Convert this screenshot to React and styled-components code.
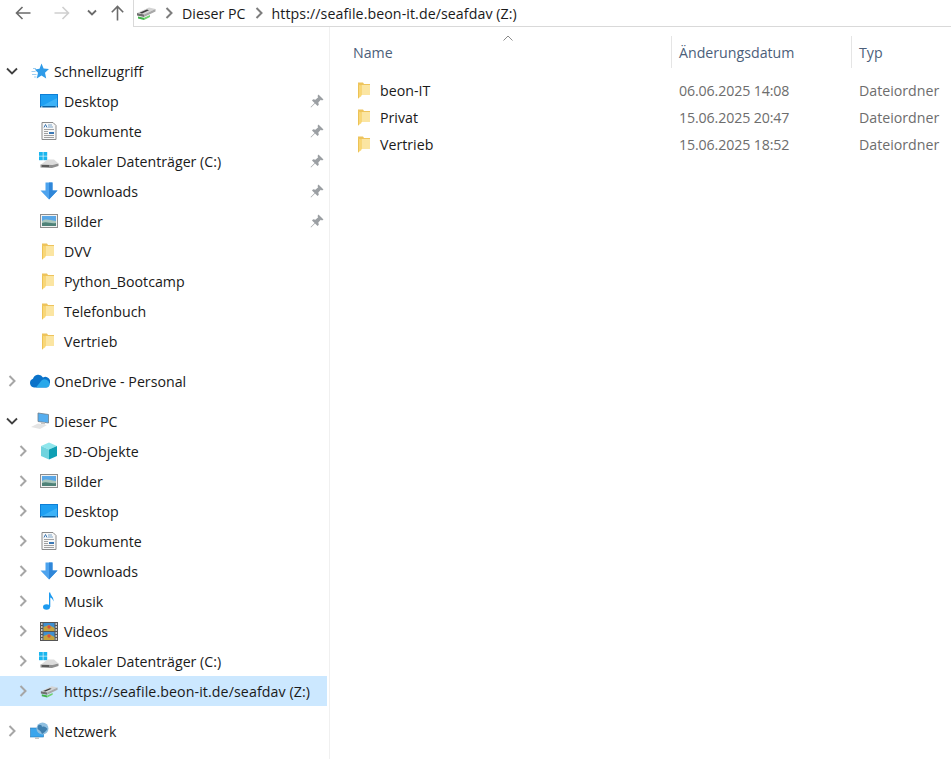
import React from "react";
import styled, { createGlobalStyle } from "styled-components";

const GlobalStyle = createGlobalStyle`
  html, body {
    margin: 0;
    padding: 0;
    height: 100%;
    background: #fff;
    overflow: hidden;
  }
  body {
    font-family: "Open Sans", "Noto Sans", "Liberation Sans", sans-serif;
    font-size: 14.2px;
    color: #1a1a1a;
  }
`;

const Window = styled.div`
  width: 951px;
  height: 759px;
  display: flex;
  flex-direction: column;
  overflow: hidden;
`;

const Toolbar = styled.div`
  height: 27px;
  flex: none;
  display: flex;
`;

const NavButtons = styled.div`
  width: 133px;
  flex: none;
  display: flex;
  align-items: center;
  padding-left: 15px;
  padding-bottom: 1px;
  box-sizing: border-box;
`;

const NavButton = styled.span`
  display: flex;
  width: ${(p) => p.$w}px;
  flex: none;
  color: ${(p) => (p.$off ? "#cfcfcf" : "#6b6b6b")};
`;

const AddressBar = styled.div`
  flex: 1;
  display: flex;
  align-items: center;
  border-left: 1px solid #d9d9d9;
  border-bottom: 1px solid #d9d9d9;
  padding-left: 2px;
  gap: 7px;
`;

const Crumb = styled.span`
  white-space: nowrap;
  letter-spacing: ${(p) => (p.$url ? "0.08px" : "0")};
`;

const Sep = styled.span`
  display: flex;
  color: #7d7d7d;
`;

const Body = styled.div`
  flex: 1;
  display: flex;
  min-height: 0;
`;

const Sidebar = styled.nav`
  width: 330px;
  flex: none;
  box-sizing: border-box;
  border-right: 1px solid #f0f0f0;
  padding-top: 29px;
`;

const Group = styled.div`
  margin-bottom: 10px;
`;

const Row = styled.div`
  height: 30px;
  width: 327px;
  display: flex;
  align-items: center;
  box-sizing: border-box;
  padding-left: ${(p) => (p.$depth ? 17 : 6)}px;
  background: ${(p) => (p.$active ? "#cce8ff" : "transparent")};
  white-space: nowrap;
`;

const Chevron = styled.span`
  width: ${(p) => (p.$depth ? 23 : 24)}px;
  height: 12px;
  flex: none;
  display: flex;
  color: ${(p) => (p.$open ? "#404040" : "#a6a6a6")};
`;

const IconSlot = styled.span`
  width: 24px;
  height: 20px;
  flex: none;
  display: flex;
  align-items: center;
`;

const Label = styled.span`
  flex: 1;
  min-width: 0;
  letter-spacing: ${(p) => (p.$wide ? "0.1px" : "0")};
`;

const Pin = styled.span`
  width: 14px;
  height: 14px;
  flex: none;
  margin-right: 3px;
  display: flex;
  color: #9b9fa3;
`;

const Main = styled.main`
  flex: 1;
  min-width: 0;
  position: relative;
`;

const SortMark = styled.span`
  position: absolute;
  left: 173px;
  top: 8px;
  display: flex;
  color: #8a8a8a;
`;

const Columns = styled.div`
  display: grid;
  grid-template-columns: 341px 180px 1fr;
`;

const HeadRow = styled(Columns)`
  height: 32px;
  margin-top: 9px;
  margin-bottom: 9px;
  align-items: stretch;
`;

const HeadCell = styled.div`
  display: flex;
  align-items: center;
  color: #4c607a;
  padding-left: ${(p) => (p.$first ? 23 : 7)}px;
  border-left: ${(p) => (p.$first ? "none" : "1px solid #e5e5e5")};
  white-space: nowrap;
`;

const FileRow = styled(Columns)`
  height: 27px;
  align-items: center;
  white-space: nowrap;
`;

const NameCell = styled.div`
  display: flex;
  align-items: center;
  padding-left: 26px;
  gap: 10px;
`;

const MetaCell = styled.div`
  color: #6d6d6d;
  padding-left: 8px;
  letter-spacing: ${(p) => (p.$tight ? "-0.12px" : "0")};
`;

const Folder = () => (
  <svg width="12" height="17" viewBox="0 0 12 17" style={{ marginLeft: 2 }}>
    <path d="M0 0.5h5l1 1.5h6v11H0z" fill="#eec45c" />
    <path d="M3.5 3H12v10H3.5z" fill="#fbe5a2" />
    <path d="M0 2.5 L3.5 3.5 V14 L0 16.5z" fill="#f9d776" />
    <path d="M0 2.5 L0.8 2.7 V16 L0 16.5z" fill="#e9bd4f" />
  </svg>
);

const Desktop = () => (
  <svg width="18" height="14" viewBox="0 0 18 14">
    <rect x="0" y="0" width="18" height="13" fill="#0f7fd6" />
    <rect x="1" y="1" width="16" height="11" fill="#1fa0f2" />
    <path d="M2 12 L17 4 V12z" fill="#3db2f7" />
    <rect x="0" y="12" width="18" height="1.5" fill="#0a5f9f" />
    <rect x="1" y="12.5" width="1.4" height="1" fill="#fff" />
    <rect x="15.6" y="12.5" width="1.4" height="1" fill="#fff" />
  </svg>
);

const Docs = () => (
  <svg width="18" height="18" viewBox="0 0 18 18">
    <path d="M2 0.5H13L16 3.5V17.5H2z" fill="#f7f7f7" stroke="#8b8b8b" />
    <path d="M4 5.5L5.5 2.5L7 5.5" stroke="#3b78b5" fill="none" />
    <path d="M8 3h4M8 5h5" stroke="#7ea6c9" />
    <path d="M4 7.5h10M4 9.5h4M4 13.5h10M4 15.5h10" stroke="#a0a0a0" />
    <path d="M9 10h5v2H9z" fill="#3b78b5" />
    <path d="M4 11.5h4" stroke="#a0a0a0" />
  </svg>
);

const LocalDisk = () => (
  <svg width="20" height="18" viewBox="0 0 20 18" style={{ marginLeft: -1 }}>
    <rect x="0" y="0" width="3.8" height="3.8" fill="#19b5ee" />
    <rect x="4.4" y="0" width="3.8" height="3.8" fill="#19b5ee" />
    <rect x="0" y="4.4" width="3.8" height="3.8" fill="#19b5ee" />
    <rect x="4.4" y="4.4" width="3.8" height="3.8" fill="#19b5ee" />
    <path d="M2 12.5 L8.5 7.5 H15 L19.5 11.5 L10 13.5z" fill="#dcdcdc" />
    <path d="M1.5 12.5 L13 13 L19.5 11.5 V14 L13 16 L1.5 15.5z" fill="#8f8f8f" />
    <path d="M3 14h7" stroke="#3a3a3a" strokeWidth="1.2" />
  </svg>
);

const NetDrive = ({ w = 18 }) => (
  <svg width={w} height={w * 0.78} viewBox="0 0 20 15.6">
    <path d="M1 8 L13 2.5 L19.5 4 L8 9.5z" fill="#d4d4d4" />
    <path d="M1 8 L8 9.5 V12 L1 10.5z" fill="#707070" />
    <path d="M8 9.5 L19.5 4 V6.5 L8 12z" fill="#a8a8a8" />
    <path d="M3.5 7.7 L11 4.6 L13 5.2 L6 8.4z" fill="#3f3f3f" />
    <path d="M2 11.5 L8 12.8 V15 L2 13.6z" fill="#41b24a" />
    <path d="M8 12.8 L14 10 V12 L8 15z" fill="#6fd16f" />
  </svg>
);

const DownArrow = () => (
  <svg width="18" height="18" viewBox="0 0 18 18">
    <path d="M5.5 0.5h7v8h5L9 17.5 0.5 8.5h5z" fill="#4da3ee" />
    <path d="M9 0.5h3.5v8h5L9 17.5z" fill="#2f86d8" />
  </svg>
);

const Pictures = () => (
  <svg width="18" height="14" viewBox="0 0 18 14">
    <rect x="0.5" y="0.5" width="17" height="13" fill="#f2f2f2" stroke="#8d8d8d" />
    <rect x="2" y="2" width="14" height="5" fill="#5aa7e6" />
    <path d="M2 7 C6 4 9 6 16 7 V12 H2z" fill="#a9c6bd" />
    <path d="M2 9 C7 7 10 10 16 9 V12 H2z" fill="#4f8278" />
  </svg>
);

const Star = () => (
  <svg width="18" height="17" viewBox="0 0 18 17" style={{ marginLeft: 1 }}>
    <path d="M10.5 0.5 L12.6 5.5 L18 6 L14 9.8 L15.2 15.5 L10.5 12.6 L5.8 15.5 L7 9.8 L3.8 6.6 L8.5 5.8z" fill="#2f9be8" />
    <path d="M2 5.5h3M0.5 8.5h4M1 11.5h4.5M3 14h2.5" stroke="#9dcdf0" strokeWidth="1" />
  </svg>
);

const Cloud = () => (
  <svg width="21" height="14" viewBox="0 0 21 14" style={{ marginLeft: -1 }}>
    <path d="M5 13.5 A4.5 4.5 0 0 1 4 4.8 A5.5 5.5 0 0 1 14 3.5 A4.8 4.8 0 0 1 20.5 10 A3.6 3.6 0 0 1 17 13.5z" fill="#0a72c9" />
    <path d="M7 13.5 L12.5 6.5 A4.8 4.8 0 0 1 20.5 10 A3.6 3.6 0 0 1 17 13.5z" fill="#28a8ea" />
  </svg>
);

const Computer = () => (
  <svg width="20" height="18" viewBox="0 0 20 18">
    <path d="M8 1 L18.5 2.5 V11 L8 9.5z" fill="#55aef0" stroke="#6f7f8c" strokeWidth="0.8" />
    <path d="M11 10 L15 10.6 L15 12.5 L11 12z" fill="#c5c5c5" />
    <path d="M1 15 L8 11.5 L17 13 L10 17z" fill="#e4e4e4" />
  </svg>
);

const Cube = () => (
  <svg width="18" height="18" viewBox="0 0 18 18">
    <path d="M9 0.5 L17 4 L9 7.5 L1 4z" fill="#8fe6ec" />
    <path d="M1 4 L9 7.5 V17.5 L1 14z" fill="#6fd3de" />
    <path d="M9 7.5 L17 4 V14 L9 17.5z" fill="#0f9fb3" />
  </svg>
);

const Note = () => (
  <svg width="18" height="18" viewBox="0 0 18 18">
    <ellipse cx="6.5" cy="15" rx="3.5" ry="2.8" fill="#1e9bf0" />
    <path d="M9 15 V0.5 H10.2 C10.8 4 14 5 13.5 9.5 C12.8 7 11.5 6 10.3 5.5 V15z" fill="#1e9bf0" />
  </svg>
);

const Film = () => (
  <svg width="18" height="19" viewBox="0 0 18 19">
    <rect x="0" y="0" width="18" height="19" fill="#555" />
    <rect x="3.5" y="1" width="11" height="8" fill="#3f8fd0" />
    <rect x="3.5" y="10" width="11" height="8" fill="#3f8fd0" />
    <path d="M3.5 5 L9 3 L14.5 6 V9 H3.5z" fill="#c7a33b" />
    <path d="M3.5 14 L9 12 L14.5 15 V18 H3.5z" fill="#c7a33b" />
    <circle cx="9" cy="5" r="1.7" fill="#d9503f" />
    <circle cx="9" cy="14" r="1.7" fill="#d9503f" />
    <path d="M1 2h1.5M1 5h1.5M1 8h1.5M1 11h1.5M1 14h1.5M1 17h1.5M15.5 2H17M15.5 5H17M15.5 8H17M15.5 11H17M15.5 14H17M15.5 17H17" stroke="#eee" strokeWidth="1.3" />
  </svg>
);

const Globe = () => (
  <svg width="20" height="18" viewBox="0 0 20 18">
    <rect x="0.5" y="6" width="13" height="9" fill="#3ba5ec" stroke="#2679b8" strokeWidth="0.6" />
    <path d="M5 15.5h4v1.4H5z" fill="#bdbdbd" />
    <circle cx="12.5" cy="6.5" r="6" fill="#8fbfe0" />
    <path d="M8 3.5 C10 2 12 3 12 5 C14 4 16 5 17.5 7 C16 9 14 11 12 12 C11 9 9 8 7.5 7z" fill="#3f7fae" />
  </svg>
);

const ChevronRight = () => (
  <svg width="12" height="12" viewBox="0 0 12 12" fill="none" stroke="currentColor" strokeWidth="2">
    <path d="M3.5 1 L8.5 6 L3.5 11" />
  </svg>
);

const ChevronDown = () => (
  <svg width="12" height="12" viewBox="0 0 12 12" fill="none" stroke="currentColor" strokeWidth="1.8">
    <path d="M1 3.5 L6 8.5 L11 3.5" />
  </svg>
);

const PinIcon = () => (
  <svg width="14" height="14" viewBox="0 0 14 14" fill="currentColor">
    <path d="M8.5 0.5 L13.5 5.5 L12 6.5 L10.8 5.8 L8.3 8.6 L8.8 10.8 L7.6 12 L5 9.4 L1 13.4 L0.6 13 L4.6 9 L2 6.4 L3.2 5.2 L5.4 5.7 L8.2 3.2 L7.5 2z" />
  </svg>
);

const ArrowLeft = () => (
  <svg width="16" height="14" viewBox="0 0 16 14" fill="none" stroke="currentColor" strokeWidth="1.6">
    <path d="M15.5 7 H1.5 M7.5 1 L1.5 7 L7.5 13" />
  </svg>
);

const ArrowRight = () => (
  <svg width="16" height="14" viewBox="0 0 16 14" fill="none" stroke="currentColor" strokeWidth="1.6">
    <path d="M0.5 7 H14.5 M8.5 1 L14.5 7 L8.5 13" />
  </svg>
);

const ArrowUp = () => (
  <svg width="13" height="16" viewBox="0 0 13 16" fill="none" stroke="currentColor" strokeWidth="1.6">
    <path d="M6.5 15.5 V1.5 M0.8 7.2 L6.5 1.5 L12.2 7.2" />
  </svg>
);

const SmallDown = () => (
  <svg width="10" height="8" viewBox="0 0 10 8" fill="none" stroke="currentColor" strokeWidth="1.8">
    <path d="M1 1.5 L5 5.5 L9 1.5" />
  </svg>
);

const SortUp = () => (
  <svg width="10" height="6" viewBox="0 0 10 6" fill="none" stroke="currentColor" strokeWidth="1">
    <path d="M0.5 5.5 L5 1 L9.5 5.5" />
  </svg>
);

const quickAccess = [
  { icon: <Desktop />, label: "Desktop", pinned: true },
  { icon: <Docs />, label: "Dokumente", pinned: true },
  { icon: <LocalDisk />, label: "Lokaler Datenträger (C:)", pinned: true },
  { icon: <DownArrow />, label: "Downloads", pinned: true },
  { icon: <Pictures />, label: "Bilder", pinned: true },
  { icon: <Folder />, label: "DVV" },
  { icon: <Folder />, label: "Python_Bootcamp" },
  { icon: <Folder />, label: "Telefonbuch" },
  { icon: <Folder />, label: "Vertrieb" },
];

const thisPc = [
  { icon: <Cube />, label: "3D-Objekte" },
  { icon: <Pictures />, label: "Bilder" },
  { icon: <Desktop />, label: "Desktop" },
  { icon: <Docs />, label: "Dokumente" },
  { icon: <DownArrow />, label: "Downloads" },
  { icon: <Note />, label: "Musik" },
  { icon: <Film />, label: "Videos" },
  { icon: <LocalDisk />, label: "Lokaler Datenträger (C:)" },
  { icon: <NetDrive />, label: "https://seafile.beon-it.de/seafdav (Z:)", active: true },
];

const files = [
  { name: "beon-IT", date: "06.06.2025 14:08", type: "Dateiordner" },
  { name: "Privat", date: "15.06.2025 20:47", type: "Dateiordner" },
  { name: "Vertrieb", date: "15.06.2025 18:52", type: "Dateiordner" },
];

const TreeRow = ({ depth, arrow, icon, label, pinned, active }) => (
  <Row $depth={depth} $active={active}>
    <Chevron $depth={depth} $open={arrow === "open"}>
      {arrow === "open" && <ChevronDown />}
      {arrow === "closed" && <ChevronRight />}
    </Chevron>
    <IconSlot>{icon}</IconSlot>
    <Label $wide={active}>{label}</Label>
    {pinned && (
      <Pin>
        <PinIcon />
      </Pin>
    )}
  </Row>
);

export default function App() {
  return (
    <Window>
      <GlobalStyle />
      <Toolbar>
        <NavButtons>
          <NavButton $w={39}>
            <ArrowLeft />
          </NavButton>
          <NavButton $w={33} $off>
            <ArrowRight />
          </NavButton>
          <NavButton $w={24}>
            <SmallDown />
          </NavButton>
          <NavButton $w={14}>
            <ArrowUp />
          </NavButton>
        </NavButtons>
        <AddressBar>
          <NetDrive w={20} />
          <Sep>
            <ChevronRight />
          </Sep>
          <Crumb>Dieser PC</Crumb>
          <Sep>
            <ChevronRight />
          </Sep>
          <Crumb $url>https://seafile.beon-it.de/seafdav (Z:)</Crumb>
        </AddressBar>
      </Toolbar>
      <Body>
        <Sidebar>
          <Group>
            <TreeRow arrow="open" icon={<Star />} label="Schnellzugriff" />
            {quickAccess.map((item) => (
              <TreeRow key={item.label} depth={1} {...item} />
            ))}
          </Group>
          <Group>
            <TreeRow arrow="closed" icon={<Cloud />} label="OneDrive - Personal" />
          </Group>
          <Group>
            <TreeRow arrow="open" icon={<Computer />} label="Dieser PC" />
            {thisPc.map((item) => (
              <TreeRow key={item.label} depth={1} arrow="closed" {...item} />
            ))}
          </Group>
          <Group>
            <TreeRow arrow="closed" icon={<Globe />} label="Netzwerk" />
          </Group>
        </Sidebar>
        <Main>
          <SortMark>
            <SortUp />
          </SortMark>
          <HeadRow>
            <HeadCell $first>Name</HeadCell>
            <HeadCell>Änderungsdatum</HeadCell>
            <HeadCell>Typ</HeadCell>
          </HeadRow>
          {files.map((file) => (
            <FileRow key={file.name}>
              <NameCell>
                <Folder />
                {file.name}
              </NameCell>
              <MetaCell $tight>{file.date}</MetaCell>
              <MetaCell>{file.type}</MetaCell>
            </FileRow>
          ))}
        </Main>
      </Body>
    </Window>
  );
}
